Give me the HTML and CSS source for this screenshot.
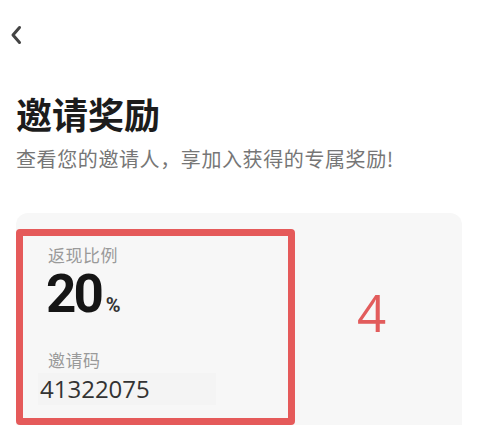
FILE: index.html
```html
<!DOCTYPE html>
<html lang="zh-CN">
<head>
<meta charset="utf-8">
<title>邀请奖励</title>
<link rel="stylesheet" href="styles.css">
</head>
<body>
<div class="page">
  <header class="topbar">
    <svg class="back" width="16" height="24" viewBox="0 0 16 24" aria-label="返回">
      <polyline points="11.5,4.5 5,12 11.5,19.5" fill="none" stroke="#444" stroke-width="3" stroke-linecap="round" stroke-linejoin="round"/>
    </svg>
  </header>
  <section class="intro">
    <h1 class="title">邀请奖励</h1>
    <p class="subtitle">查看您的邀请人，享加入获得的专属奖励!</p>
  </section>
  <section class="card">
    <div class="row">
      <div class="item">
        <div class="label">返现比例</div>
        <div class="rate">20<span class="pct">%</span></div>
        <div class="label label-code">邀请码</div>
        <div class="code">41322075</div>
      </div>
      <div class="num">4</div>
    </div>
  </section>
</div>
</body>
</html>
```

FILE: styles.css
```css
html, body {
  margin: 0;
  padding: 0;
  background: #ffffff;
}
body {
  font-family: "Noto Sans CJK SC", "Noto Sans", sans-serif;
  color: #222;
}
.page {
  width: 480px;
  height: 427px;
  overflow: hidden;
}
.topbar {
  padding: 23px 0 0 8px;
  height: 24px;
}
.back {
  display: block;
}
.intro {
  padding: 0 16px;
  margin-top: 48px;
}
.title {
  margin: 0;
  font-size: 36px;
  line-height: 36px;
  font-weight: 700;
  color: #1c1c1c;
}
.subtitle {
  margin: 18px 0 0 0;
  font-size: 20px;
  line-height: 20px;
  letter-spacing: 0.6px;
  color: #767676;
}
.card {
  margin: 44px 18px 0 16px;
  background: #f7f7f7;
  border-radius: 12px 12px 0 0;
  padding-top: 16px;
}
.row {
  display: flex;
  align-items: flex-start;
}
.item {
  box-sizing: border-box;
  width: 279px;
  height: 196px;
  border: 7px solid #e55a5a;
  border-radius: 4px;
  padding: 10px 0 0 15px;
}
.label {
  padding-left: 10px;
  font-size: 17px;
  line-height: 18px;
  letter-spacing: 0.5px;
  color: #9a9a9a;
}
.rate {
  margin-top: 4px;
  padding-left: 8px;
  font-family: Roboto, "Liberation Sans", sans-serif;
  font-weight: 700;
  font-size: 53px;
  line-height: 53px;
  letter-spacing: -3px;
  color: #151515;
}
.pct {
  font-size: 20px;
  line-height: 1;
  letter-spacing: 0;
  margin-left: 5px;
  color: #333;
}
.label-code {
  margin-top: 30px;
}
.code {
  margin-top: 4px;
  width: 178px;
  height: 32px;
  box-sizing: border-box;
  padding-left: 2px;
  background: #f4f4f4;
  font-family: "Open Sans", "Liberation Sans", sans-serif;
  font-size: 24px;
  line-height: 32px;
  color: #333;
}
.num {
  margin: 58px 0 0 62px;
  font-family: "Open Sans", "Liberation Sans", sans-serif;
  font-size: 51px;
  line-height: 51px;
  font-weight: 400;
  color: #e25c5c;
}
```
